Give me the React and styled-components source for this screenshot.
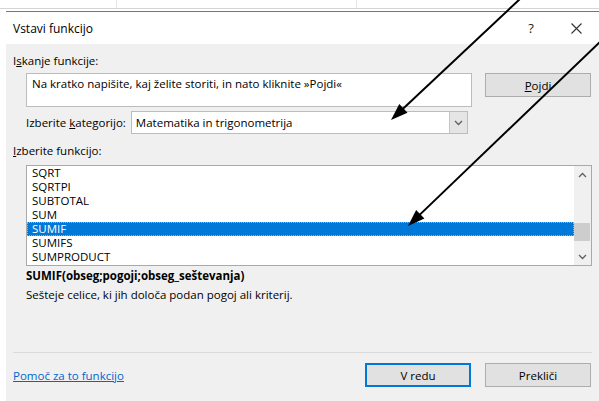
import React from "react";
import styled, { createGlobalStyle } from "styled-components";

const GlobalStyle = createGlobalStyle`
  body {
    margin: 0;
    background: #ffffff;
    font-family: "Open Sans", "Noto Sans", sans-serif;
    font-size: 11.5px;
    color: #000;
  }
`;

const Screen = styled.div`
  position: relative;
  width: 599px;
  height: 401px;
  overflow: hidden;
  background: #ffffff;
`;

const TopStrip = styled.div`
  height: 8px;
  border-bottom: 1px solid #d4d4d4;
  display: flex;
`;

const StripCell = styled.div`
  width: ${(p) => p.w}px;
  border-right: 1px solid #e6e6e6;
`;

const Dialog = styled.div`
  margin: 2px 0 0 6px;
  border-top: 1px solid #2d89d8;
  display: flex;
  flex-direction: column;
  height: 389px;
`;

const TitleBar = styled.div`
  height: 32px;
  background: #ffffff;
  display: flex;
  align-items: center;
  padding-left: 7px;
  font-size: 12px;
`;

const Title = styled.div`
  flex: 1;
  padding-top: 1px;
`;

const TitleButton = styled.div`
  width: ${(p) => p.w}px;
  display: flex;
  justify-content: center;
  align-items: center;
  font-size: 13px;
  color: #222;
`;

const Body = styled.div`
  flex: 1;
  background: #f0f0f0;
  padding: 9px 7px 0 7px;
  display: flex;
  flex-direction: column;
`;

const Label = styled.div`
  height: 16px;
  line-height: 16px;
  margin-top: ${(p) => p.mt || 0}px;
  margin-left: ${(p) => p.ml || 0}px;
  white-space: nowrap;
  font-weight: ${(p) => (p.bold ? 700 : 400)};
`;

const SearchRow = styled.div`
  display: flex;
  align-items: flex-start;
  margin: 4px 0 0 13px;
`;

const SearchBox = styled.div`
  box-sizing: border-box;
  width: 446px;
  height: 34px;
  background: #ffffff;
  border: 1px solid #bcbcbc;
  padding: 2px 5px;
  line-height: 16px;
  white-space: nowrap;
`;

const Button = styled.div`
  box-sizing: border-box;
  width: 106px;
  height: 24px;
  margin-left: ${(p) => p.ml || 0}px;
  background: #e1e1e1;
  border: ${(p) => (p.primary ? "2px solid #0078d7" : "1px solid #adadad")};
  display: flex;
  align-items: center;
  justify-content: center;
`;

const CategoryRow = styled.div`
  display: flex;
  align-items: center;
  margin: 4px 0 0 13px;
  height: 23px;
`;

const Select = styled.div`
  box-sizing: border-box;
  width: 337px;
  height: 23px;
  margin-left: 5px;
  background: #ffffff;
  border: 1px solid #bcbcbc;
  display: flex;
  align-items: center;
  padding-left: 4px;
`;

const SelectText = styled.div`
  flex: 1;
`;

const DropButton = styled.div`
  width: 17px;
  height: 21px;
  background: #e5e5e5;
  border-left: 1px solid #c6c6c6;
  display: flex;
  align-items: center;
  justify-content: center;
`;

const ListBox = styled.div`
  box-sizing: border-box;
  width: 566px;
  height: 101px;
  margin: 6px 0 0 13px;
  background: #ffffff;
  border: 1px solid #a9a9a9;
  display: flex;
`;

const Rows = styled.div`
  flex: 1;
`;

const Row = styled.div`
  height: 14px;
  line-height: 14px;
  padding-left: 5px;
  font-size: 11.5px;
  background: ${(p) => (p.selected ? "#0078d7" : "transparent")};
  color: ${(p) => (p.selected ? "#ffffff" : "#000")};
  outline: ${(p) => (p.selected ? "1px dotted #e8a05a" : "none")};
  outline-offset: -1px;
`;

const ScrollBar = styled.div`
  width: 17px;
  background: #f0f0f0;
  display: flex;
  flex-direction: column;
  align-items: center;
`;

const ScrollArrow = styled.div`
  height: 17px;
  width: 17px;
  display: flex;
  align-items: center;
  justify-content: center;
`;

const ScrollTrack = styled.div`
  flex: 1;
  width: 17px;
  position: relative;
`;

const Thumb = styled.div`
  position: absolute;
  left: 0;
  right: 1px;
  top: 40px;
  height: 18px;
  background: #cdcdcd;
`;

const Spacer = styled.div`
  flex: 1;
`;

const Separator = styled.div`
  height: 1px;
  background: #dadada;
  width: 579px;
`;

const Footer = styled.div`
  display: flex;
  align-items: center;
  height: 48px;
  padding-bottom: 4px;
  box-sizing: border-box;
`;

const HelpLink = styled.a`
  color: #0066cc;
  text-decoration: underline;
  flex: 1;
  cursor: pointer;
`;

const Overlay = styled.svg`
  position: absolute;
  left: 0;
  top: 0;
  pointer-events: none;
`;

const Chevron = ({ up }) => (
  <svg width="9" height="6" viewBox="0 0 9 6">
    <polyline
      points={up ? "1,5 4.5,1.5 8,5" : "1,1 4.5,4.5 8,1"}
      fill="none"
      stroke="#606060"
      strokeWidth="1.3"
    />
  </svg>
);

// line with a filled head ending at (x2, y2)
function Arrow({ x1, y1, x2, y2 }) {
  const dx = x2 - x1;
  const dy = y2 - y1;
  const len = Math.hypot(dx, dy);
  const ux = dx / len;
  const uy = dy / len;
  const headLen = 17;
  const half = 6;
  const bx = x2 - ux * headLen;
  const by = y2 - uy * headLen;
  const px = -uy * half;
  const py = ux * half;
  return (
    <g>
      <line x1={x1} y1={y1} x2={bx + ux * 2} y2={by + uy * 2} stroke="#000" strokeWidth="2" />
      <polygon
        points={`${x2},${y2} ${bx + px},${by + py} ${bx - px},${by - py}`}
        fill="#000"
      />
    </g>
  );
}

const functions = ["SQRT", "SQRTPI", "SUBTOTAL", "SUM", "SUMIF", "SUMIFS", "SUMPRODUCT"];

export default function App() {
  return (
    <Screen>
      <GlobalStyle />
      <TopStrip>
        <StripCell w={116} />
        <StripCell w={239} />
      </TopStrip>
      <Dialog>
        <TitleBar>
          <Title>Vstavi funkcijo</Title>
          <TitleButton w={44}>?</TitleButton>
          <TitleButton w={46}>
            <svg width="11" height="11" viewBox="0 0 11 11">
              <path d="M0.5 0.5 L10.5 10.5 M10.5 0.5 L0.5 10.5" stroke="#333" strokeWidth="1.1" />
            </svg>
          </TitleButton>
        </TitleBar>
        <Body>
          <Label>
            I<u>s</u>kanje funkcije:
          </Label>
          <SearchRow>
            <SearchBox>Na kratko napišite, kaj želite storiti, in nato kliknite »Pojdi«</SearchBox>
            <Button ml={13}>
              <span>
                <u>P</u>ojdi
              </span>
            </Button>
          </SearchRow>
          <CategoryRow>
            <span>
              Izberite <u>k</u>ategorijo:
            </span>
            <Select>
              <SelectText>Matematika in trigonometrija</SelectText>
              <DropButton>
                <Chevron />
              </DropButton>
            </Select>
          </CategoryRow>
          <Label mt={9}>
            <u>I</u>zberite funkcijo:
          </Label>
          <ListBox>
            <Rows>
              {functions.map((f) => (
                <Row key={f} selected={f === "SUMIF"}>
                  {f}
                </Row>
              ))}
            </Rows>
            <ScrollBar>
              <ScrollArrow>
                <Chevron up />
              </ScrollArrow>
              <ScrollTrack>
                <Thumb />
              </ScrollTrack>
              <ScrollArrow>
                <Chevron />
              </ScrollArrow>
            </ScrollBar>
          </ListBox>
          <Label mt={2} ml={13} bold>
            SUMIF(obseg;pogoji;obseg_seštevanja)
          </Label>
          <Label mt={3} ml={13}>
            Sešteje celice, ki jih določa podan pogoj ali kriterij.
          </Label>
          <Spacer />
          <Separator />
          <Footer>
            <HelpLink>Pomoč za to funkcijo</HelpLink>
            <Button primary>V redu</Button>
            <Button ml={14}>Prekliči</Button>
            <div style={{ width: 1 }} />
          </Footer>
        </Body>
      </Dialog>
      <Overlay width="599" height="401">
        <Arrow x1={521} y1={-2} x2={391} y2={120} />
        <Arrow x1={602} y1={40} x2={408} y2={226} />
      </Overlay>
    </Screen>
  );
}
